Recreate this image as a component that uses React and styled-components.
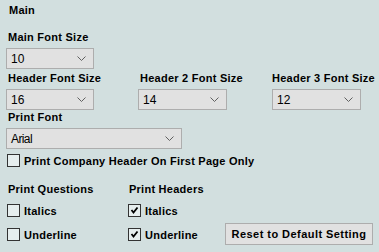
import React from "react";
import styled, { createGlobalStyle } from "styled-components";

const Global = createGlobalStyle`
  html, body {
    margin: 0;
    padding: 0;
    background: #d2dfdf;
  }
  body {
    font-family: "Liberation Sans", Arial, sans-serif;
    font-size: 11px;
    color: #000;
  }
`;

const Panel = styled.div`
  width: 379px;
  height: 252px;
  box-sizing: border-box;
  padding: 4px 6px 0 6px;
  background: #d2dfdf;
  display: flex;
  flex-direction: column;
  overflow: hidden;
`;

const Title = styled.div`
  font-weight: bold;
  padding-left: 3px;
  line-height: 13px;
  height: 13px;
  margin-bottom: 14px;
  letter-spacing: 0.25px;
`;

const Label = styled.div`
  font-weight: bold;
  padding-left: ${(p) => p.pl ?? 2}px;
  line-height: 13px;
  height: 13px;
  white-space: nowrap;
  letter-spacing: 0.25px;
  margin-bottom: ${(p) => p.gap ?? 4}px;
`;

const Field = styled.div`
  display: flex;
  flex-direction: column;
  margin-bottom: ${(p) => p.mb || 0}px;
`;

const Row = styled.div`
  display: grid;
  grid-template-columns: ${(p) => p.cols};
  margin-bottom: ${(p) => p.mb || 0}px;
`;

const SelectBox = styled.div`
  box-sizing: border-box;
  width: ${(p) => p.w}px;
  height: 21px;
  background: #e1e1e1;
  border: 1px solid #adadad;
  display: flex;
  align-items: center;
  justify-content: space-between;
  padding: 0 7px 0 4px;
  font-size: 12px;
  letter-spacing: ${(p) => p.ls || 0}px;
`;

const Chevron = () => (
  <svg width="9" height="5" viewBox="0 0 9 5">
    <polyline points="0.5,0.5 4.5,4.5 8.5,0.5" fill="none" stroke="#606060" strokeWidth="1" />
  </svg>
);

const Select = ({ w, value, ls }) => (
  <SelectBox w={w} ls={ls}>
    <span>{value}</span>
    <Chevron />
  </SelectBox>
);

const Check = styled.label`
  display: flex;
  align-items: center;
  gap: 4px;
  font-weight: bold;
  height: 13px;
  white-space: nowrap;
  letter-spacing: 0.25px;
  margin-left: 1px;
  margin-bottom: ${(p) => p.mb || 0}px;
`;

const Box = styled.span`
  box-sizing: border-box;
  width: 13px;
  height: 13px;
  flex: none;
  border: 1px solid #333;
  background: #e6eeee;
  display: flex;
  align-items: center;
  justify-content: center;
`;

const CheckBox = ({ checked, children, mb }) => (
  <Check mb={mb}>
    <Box>
      {checked && (
        <svg width="9" height="9" viewBox="0 0 9 9">
          <polyline points="1.5,4 3.5,6.5 7.5,1.5" fill="none" stroke="#000" strokeWidth="1.8" />
        </svg>
      )}
    </Box>
    {children}
  </Check>
);

const Column = styled.div`
  display: flex;
  flex-direction: column;
`;

const BottomRow = styled.div`
  display: grid;
  grid-template-columns: 121px 98px auto;
  align-items: end;
`;

const Button = styled.button`
  box-sizing: border-box;
  width: 148px;
  height: 22px;
  margin-bottom: 7px;
  background: #e1e1e1;
  border: 1px solid #adadad;
  font-family: "Liberation Sans", Arial, sans-serif;
  font-weight: bold;
  font-size: 11px;
  letter-spacing: 0.45px;
  color: #000;
  padding: 0;
`;

export default function App() {
  return (
    <>
      <Global />
      <Panel>
        <Title>Main</Title>
        <Field mb={3}>
          <Label>Main Font Size</Label>
          <Select w={88} value="10" />
        </Field>
        <Row cols="132px 134px auto" mb={1}>
          <Field>
            <Label>Header Font Size</Label>
            <Select w={88} value="16" />
          </Field>
          <Field>
            <Label>Header 2 Font Size</Label>
            <Select w={89} value="14" />
          </Field>
          <Field>
            <Label pl={0}>Header 3 Font Size</Label>
            <Select w={89} value="12" />
          </Field>
        </Row>
        <Field mb={5}>
          <Label>Print Font</Label>
          <Select w={176} value="Arial" ls={-0.6} />
        </Field>
        <CheckBox mb={16}>Print Company Header On First Page Only</CheckBox>
        <BottomRow>
          <Column>
            <Label gap={8}>Print Questions</Label>
            <CheckBox mb={11}>Italics</CheckBox>
            <CheckBox mb={11}>Underline</CheckBox>
          </Column>
          <Column>
            <Label gap={8}>Print Headers</Label>
            <CheckBox checked mb={11}>Italics</CheckBox>
            <CheckBox checked mb={11}>Underline</CheckBox>
          </Column>
          <Button>Reset to Default Setting</Button>
        </BottomRow>
      </Panel>
    </>
  );
}
